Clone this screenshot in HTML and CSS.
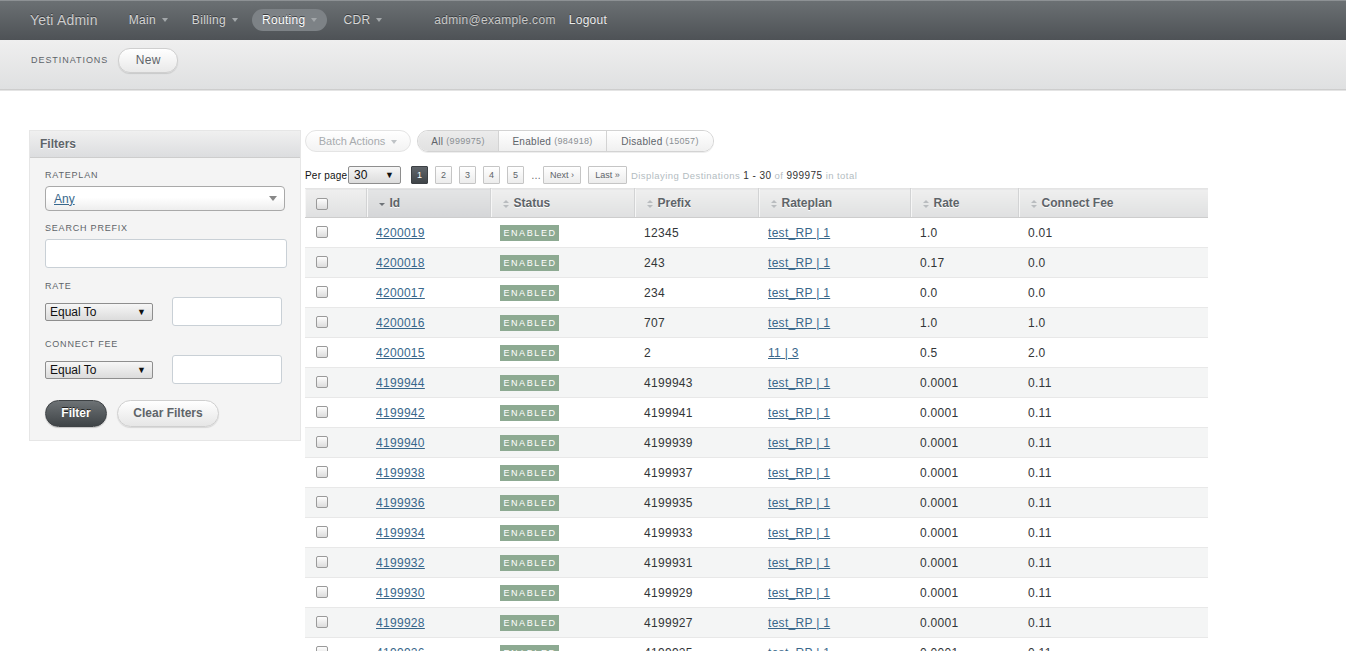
FILE: index.html
```html
<!DOCTYPE html>
<html>
<head>
<meta charset="utf-8">
<title>Destinations | Yeti Admin</title>
<link rel="stylesheet" href="styles.css">
</head>
<body>
<header class="topbar">
  <div class="site-title">Yeti Admin</div>
  <ul class="tabs">
    <li class="tab">Main<span class="caret"></span></li>
    <li class="tab">Billing<span class="caret"></span></li>
    <li class="tab current">Routing<span class="caret"></span></li>
    <li class="tab">CDR<span class="caret"></span></li>
  </ul>
  <ul class="utility">
    <li class="user">admin@example.com</li>
    <li class="logout">Logout</li>
  </ul>
</header>
<div class="titlebar">
  <h2 class="page-title">Destinations</h2>
  <span class="pill-btn">New</span>
</div>
<div class="content">
  <aside class="sidebar">
    <div class="panel">
      <h3 class="panel-head">Filters</h3>
      <div class="panel-body">
        <label class="flabel">Rateplan</label>
        <div class="s2box"><a class="s2val">Any</a><span class="s2arrow"></span></div>
        <label class="flabel">Search Prefix</label>
        <div class="textbox wide"></div>
        <label class="flabel">Rate</label>
        <div class="pair">
          <div class="nsel">Equal To<span class="tri">▼</span></div>
          <div class="textbox small"></div>
        </div>
        <label class="flabel">Connect Fee</label>
        <div class="pair">
          <div class="nsel">Equal To<span class="tri">▼</span></div>
          <div class="textbox small"></div>
        </div>
        <div class="buttons">
          <span class="dark-btn">Filter</span>
          <span class="light-btn">Clear Filters</span>
        </div>
      </div>
    </div>
  </aside>
  <main class="main">
    <div class="actions">
      <span class="batch">Batch Actions<span class="caret grey"></span></span>
      <div class="scopes">
        <span class="scope selected">All <span class="cnt">(999975)</span></span>
        <span class="scope">Enabled <span class="cnt">(984918)</span></span>
        <span class="scope">Disabled <span class="cnt">(15057)</span></span>
      </div>
    </div>
    <div class="pager">
      <span class="perpage">Per page</span>
      <div class="ppsel">30<span class="tri">▼</span></div>
      <span class="pg active">1</span>
      <span class="pg">2</span>
      <span class="pg">3</span>
      <span class="pg">4</span>
      <span class="pg">5</span>
      <span class="gap">…</span>
      <span class="pg next">Next ›</span>
      <span class="pg last">Last »</span>
      <span class="info">Displaying Destinations <b>1&nbsp;-&nbsp;30</b> of <b>999975</b> in total</span>
    </div>
    <table class="grid">
      <colgroup>
        <col class="c-cb"><col class="c-id"><col class="c-status"><col class="c-prefix"><col class="c-rp"><col class="c-rate"><col class="c-fee">
      </colgroup>
      <thead>
        <tr>
          <th class="cb"><span class="check"></span></th>
          <th class="sorted"><span class="sort-desc"></span>Id</th>
          <th><span class="sort-both"></span>Status</th>
          <th><span class="sort-both"></span>Prefix</th>
          <th><span class="sort-both"></span>Rateplan</th>
          <th><span class="sort-both"></span>Rate</th>
          <th><span class="sort-both"></span>Connect Fee</th>
        </tr>
      </thead>
      <tbody>
        <tr><td class="cb"><span class="check"></span></td><td><a>4200019</a></td><td><span class="tag">Enabled</span></td><td>12345</td><td><a>test_RP | 1</a></td><td>1.0</td><td>0.01</td></tr>
        <tr><td class="cb"><span class="check"></span></td><td><a>4200018</a></td><td><span class="tag">Enabled</span></td><td>243</td><td><a>test_RP | 1</a></td><td>0.17</td><td>0.0</td></tr>
        <tr><td class="cb"><span class="check"></span></td><td><a>4200017</a></td><td><span class="tag">Enabled</span></td><td>234</td><td><a>test_RP | 1</a></td><td>0.0</td><td>0.0</td></tr>
        <tr><td class="cb"><span class="check"></span></td><td><a>4200016</a></td><td><span class="tag">Enabled</span></td><td>707</td><td><a>test_RP | 1</a></td><td>1.0</td><td>1.0</td></tr>
        <tr><td class="cb"><span class="check"></span></td><td><a>4200015</a></td><td><span class="tag">Enabled</span></td><td>2</td><td><a>11 | 3</a></td><td>0.5</td><td>2.0</td></tr>
        <tr><td class="cb"><span class="check"></span></td><td><a>4199944</a></td><td><span class="tag">Enabled</span></td><td>4199943</td><td><a>test_RP | 1</a></td><td>0.0001</td><td>0.11</td></tr>
        <tr><td class="cb"><span class="check"></span></td><td><a>4199942</a></td><td><span class="tag">Enabled</span></td><td>4199941</td><td><a>test_RP | 1</a></td><td>0.0001</td><td>0.11</td></tr>
        <tr><td class="cb"><span class="check"></span></td><td><a>4199940</a></td><td><span class="tag">Enabled</span></td><td>4199939</td><td><a>test_RP | 1</a></td><td>0.0001</td><td>0.11</td></tr>
        <tr><td class="cb"><span class="check"></span></td><td><a>4199938</a></td><td><span class="tag">Enabled</span></td><td>4199937</td><td><a>test_RP | 1</a></td><td>0.0001</td><td>0.11</td></tr>
        <tr><td class="cb"><span class="check"></span></td><td><a>4199936</a></td><td><span class="tag">Enabled</span></td><td>4199935</td><td><a>test_RP | 1</a></td><td>0.0001</td><td>0.11</td></tr>
        <tr><td class="cb"><span class="check"></span></td><td><a>4199934</a></td><td><span class="tag">Enabled</span></td><td>4199933</td><td><a>test_RP | 1</a></td><td>0.0001</td><td>0.11</td></tr>
        <tr><td class="cb"><span class="check"></span></td><td><a>4199932</a></td><td><span class="tag">Enabled</span></td><td>4199931</td><td><a>test_RP | 1</a></td><td>0.0001</td><td>0.11</td></tr>
        <tr><td class="cb"><span class="check"></span></td><td><a>4199930</a></td><td><span class="tag">Enabled</span></td><td>4199929</td><td><a>test_RP | 1</a></td><td>0.0001</td><td>0.11</td></tr>
        <tr><td class="cb"><span class="check"></span></td><td><a>4199928</a></td><td><span class="tag">Enabled</span></td><td>4199927</td><td><a>test_RP | 1</a></td><td>0.0001</td><td>0.11</td></tr>
        <tr><td class="cb"><span class="check"></span></td><td><a>4199926</a></td><td><span class="tag">Enabled</span></td><td>4199925</td><td><a>test_RP | 1</a></td><td>0.0001</td><td>0.11</td></tr>
      </tbody>
    </table>
  </main>
</div>
</body>
</html>
```
FILE: styles.css
```css
html { scrollbar-width: none; }
html::-webkit-scrollbar { display: none; }
body {
  margin: 0;
  font-family: "Liberation Sans", Arial, sans-serif;
  font-size: 12px;
  color: #323537;
  background: #fff;
}
ul { list-style: none; margin: 0; padding: 0; }

/* top header */
.topbar {
  box-sizing: border-box;
  height: 40px;
  border-top: 1px solid #8d9194;
  background: linear-gradient(#6b7073, #4e5256);
  display: flex;
  align-items: center;
  padding: 0 0 2px 30px;
  text-shadow: 0 -1px 0 #3a3d40;
  letter-spacing: 0.3px;
}
.site-title {
  font-size: 14px;
  color: #cdcdcd;
  margin-right: 21px;
  letter-spacing: 0.2px;
}
.tabs { display: flex; gap: 4px; }
.tab {
  height: 22px;
  line-height: 22px;
  padding: 0 10px;
  border-radius: 11px;
  color: #d6d6d6;
  display: flex;
  align-items: center;
}
.tab.current {
  background: #7d8286;
  color: #fff;
}
.tab:last-child { margin-left: 2px; }
.caret {
  display: inline-block;
  width: 0; height: 0;
  border-left: 3px solid transparent;
  border-right: 3px solid transparent;
  border-top: 4px solid #a3a7aa;
  margin-left: 6px;
  margin-top: 1px;
}
.caret.grey { border-top-color: #bfc3c6; margin-left: 6px; }
.utility { display: flex; margin-left: 42px; gap: 13px; }
.user { color: #c9c9c9; }
.logout { color: #ececec; }

/* title bar */
.titlebar {
  box-sizing: border-box;
  height: 50px;
  background: linear-gradient(#efefef, #dfe0e1);
  border-bottom: 1px solid #cdcdcd;
  box-shadow: 0 1px 0 #e4e4e4;
  display: flex;
  align-items: center;
  padding: 0 0 9px 31px;
}
.page-title {
  margin: 0 10px 0 0;
  font-size: 9px;
  font-weight: normal;
  letter-spacing: 0.95px;
  text-transform: uppercase;
  color: #5e6469;
}
.pill-btn {
  width: 58px;
  height: 23px;
  line-height: 22px;
  text-align: center;
  border: 1px solid #cfcfcf;
  border-radius: 12px;
  background: linear-gradient(#ffffff, #e9e9e9);
  box-shadow: 0 1px 1px rgba(0,0,0,0.12);
  color: #5e6469;
  letter-spacing: 0.3px;
}

/* content */
.content {
  display: flex;
  align-items: flex-start;
  padding: 40px 0 0 30px;
  gap: 5px;
}
.sidebar { width: 270px; flex: none; margin-top: 1px; }
.panel {
  background: #f4f4f4;
  box-shadow: 0 0 0 1px #e6e6e6;
}
.panel-head {
  margin: 0;
  height: 27px;
  line-height: 27px;
  padding-left: 10px;
  font-size: 12px;
  font-weight: bold;
  color: #5e6469;
  background: linear-gradient(#f0f0f0, #dcdddf);
  border-bottom: 1px solid #cdcdcd;
  box-sizing: border-box;
  text-shadow: 0 1px 0 #fff;
}
.panel-body { padding: 12px 15px 13px 15px; }
.flabel {
  display: block;
  font-size: 9px;
  letter-spacing: 0.8px;
  text-transform: uppercase;
  color: #5e6469;
  line-height: 11px;
  margin-bottom: 5px;
}
.s2box {
  height: 23px;
  border: 1px solid #a9a9a9;
  border-radius: 4px;
  background: linear-gradient(#ffffff 45%, #eeeeee);
  display: flex;
  align-items: center;
  justify-content: space-between;
  padding: 0 7px 0 8px;
  width: 223px;
  margin-bottom: 12px;
}
.s2val { color: #38678b; text-decoration: underline; font-size: 12px; }
.s2arrow {
  width: 0; height: 0;
  border-left: 4px solid transparent;
  border-right: 4px solid transparent;
  border-top: 5px solid #888;
}
.textbox {
  background: #fff;
  border: 1px solid #c9d0d6;
  border-radius: 3px;
  box-sizing: border-box;
}
.textbox.wide { width: 242px; height: 29px; margin-bottom: 13px; }
.textbox.small { width: 110px; height: 29px; }
.pair {
  display: flex;
  align-items: center;
  gap: 19px;
  margin-bottom: 13px;
}
.nsel, .ppsel {
  box-sizing: border-box;
  height: 18px;
  border: 1px solid #8e8e8e;
  border-radius: 2px;
  background: linear-gradient(#f6f6f6, #dcdcdc);
  display: flex;
  align-items: center;
  justify-content: space-between;
  font-size: 12px;
  color: #111;
}
.nsel { width: 108px; padding: 0 6px 0 4px; }
.tri { font-size: 9px; color: #111; }
.buttons { display: flex; gap: 10px; margin-top: 16px; }
.dark-btn, .light-btn {
  box-sizing: border-box;
  height: 27px;
  line-height: 25px;
  border-radius: 14px;
  font-weight: bold;
  text-align: center;
}
.dark-btn {
  width: 62px;
  color: #fff;
  background: linear-gradient(#6d7275, #3f4447);
  border: 1px solid #3e4245;
  text-shadow: 0 -1px 0 #222;
  box-shadow: 0 1px 1px rgba(0,0,0,0.2);
}
.light-btn {
  width: 102px;
  color: #5e6469;
  background: linear-gradient(#ffffff, #e6e6e6);
  border: 1px solid #cfcfcf;
  box-shadow: 0 1px 1px rgba(0,0,0,0.12);
}

/* main column */
.main { flex: none; width: 903px; }
.actions { display: flex; gap: 6px; height: 22px; }
.batch {
  box-sizing: border-box;
  width: 106px;
  height: 22px;
  border: 1px solid #e4e4e4;
  border-radius: 11px;
  background: linear-gradient(#ffffff, #f3f3f3);
  color: #a7abae;
  font-size: 11px;
  display: flex;
  align-items: center;
  justify-content: center;
}
.scopes {
  display: flex;
  height: 22px;
  box-sizing: border-box;
  border: 1px solid #d3d3d3;
  border-radius: 11px;
  overflow: hidden;
  box-shadow: 0 1px 0 #eee;
}
.scope {
  font-size: 10px;
  letter-spacing: 0.3px;
  color: #5e6469;
  display: flex;
  align-items: center;
  justify-content: center;
  background: linear-gradient(#ffffff, #f0f0f0);
  border-left: 1px solid #d3d3d3;
}
.scope:first-child { border-left: none; width: 80px; }
.scope:nth-child(2) { width: 107px; }
.scope:nth-child(3) { width: 106px; }
.scope.selected { background: linear-gradient(#ececec, #e1e1e1); }
.cnt { font-size: 9px; color: #8a8f93; margin-left: 3px; }

.pager {
  display: flex;
  align-items: center;
  margin-top: 14px;
  height: 18px;
}
.perpage { font-size: 10px; color: #111; width: 43px; letter-spacing: 0.2px; }
.ppsel { width: 53px; padding: 0 6px 0 5px; margin-right: 10px; }
.pg {
  box-sizing: border-box;
  height: 18px;
  width: 17px;
  line-height: 16px;
  text-align: center;
  font-size: 9px;
  color: #5e6469;
  border: 1px solid #c5c5c5;
  border-radius: 1px;
  background: linear-gradient(#ffffff, #ececec);
  margin-right: 7px;
}
.pg.active {
  color: #fff;
  background: linear-gradient(#60656a, #3f4448);
  border-color: #3c4044;
}
.pg.next { width: 38px; }
.pg.last { width: 39px; margin-right: 4px; }
.gap { font-size: 10px; color: #5e6469; margin-right: 2px; width: 10px; }
.info { font-size: 9.5px; color: #b3bcc1; letter-spacing: 0.45px; }
.info b { font-weight: normal; color: #333; font-size: 10px; }

/* table */
.grid {
  margin-top: 4px;
  width: 903px;
  border-collapse: collapse;
  table-layout: fixed;
}
.c-cb { width: 61px; }
.c-id { width: 124px; }
.c-status { width: 144px; }
.c-prefix { width: 124px; }
.c-rp { width: 152px; }
.c-rate { width: 108px; }
.c-fee { width: 190px; }
.grid th {
  height: 29px;
  box-sizing: border-box;
  padding: 0 0 0 12px;
  text-align: left;
  font-size: 12px;
  font-weight: bold;
  color: #5e6469;
  background: linear-gradient(#efefef, #dfe0e1);
  border-top: 1px solid #e4e4e4;
  border-bottom: 1px solid #cdcdcd;
  border-right: 1px solid #d2d3d4;
  box-shadow: inset 1px 0 0 #f6f6f6;
  text-shadow: 0 1px 0 #fff;
  white-space: nowrap;
}
.grid th:last-child { border-right: none; }
.grid th.sorted { background: linear-gradient(#e4e5e6, #d5d6d8); }
.grid th.cb { padding-left: 11px; }
.sort-both, .sort-desc {
  display: inline-block;
  width: 6px;
  height: 8px;
  margin-right: 5px;
  vertical-align: -1px;
  position: relative;
}
.sort-both::before, .sort-both::after {
  content: "";
  position: absolute;
  left: 0;
  border-left: 3px solid transparent;
  border-right: 3px solid transparent;
}
.sort-both::before { top: 0; border-bottom: 3px solid #b9bcbf; }
.sort-both::after { top: 5px; border-top: 3px solid #b9bcbf; }
.sort-desc::after {
  content: "";
  position: absolute;
  left: 0;
  top: 3px;
  border-left: 3px solid transparent;
  border-right: 3px solid transparent;
  border-top: 3px solid #6e7378;
}
.grid td {
  height: 30px;
  box-sizing: border-box;
  padding: 0 0 0 10px;
  border-bottom: 1px solid #e8e8e8;
  color: #323537;
  vertical-align: middle;
  white-space: nowrap;
  letter-spacing: 0.3px;
}
.grid td.cb { padding-left: 11px; padding-bottom: 3px; }
.grid tbody tr:nth-child(even) td { background: #f4f5f5; }
.grid a { color: #38678b; text-decoration: underline; }
.check {
  display: inline-block;
  width: 12px;
  height: 12px;
  box-sizing: border-box;
  border: 1px solid #9a9a9a;
  border-radius: 2px;
  background: linear-gradient(#fdfdfd, #dcdcdc);
  vertical-align: middle;
}
.tag {
  display: inline-block;
  width: 59px;
  height: 16px;
  line-height: 16px;
  text-align: center;
  background: #8daa92;
  color: #fff;
  font-size: 9px;
  letter-spacing: 1.6px;
  text-transform: uppercase;
  padding-left: 1px;
  box-sizing: border-box;
}
```
